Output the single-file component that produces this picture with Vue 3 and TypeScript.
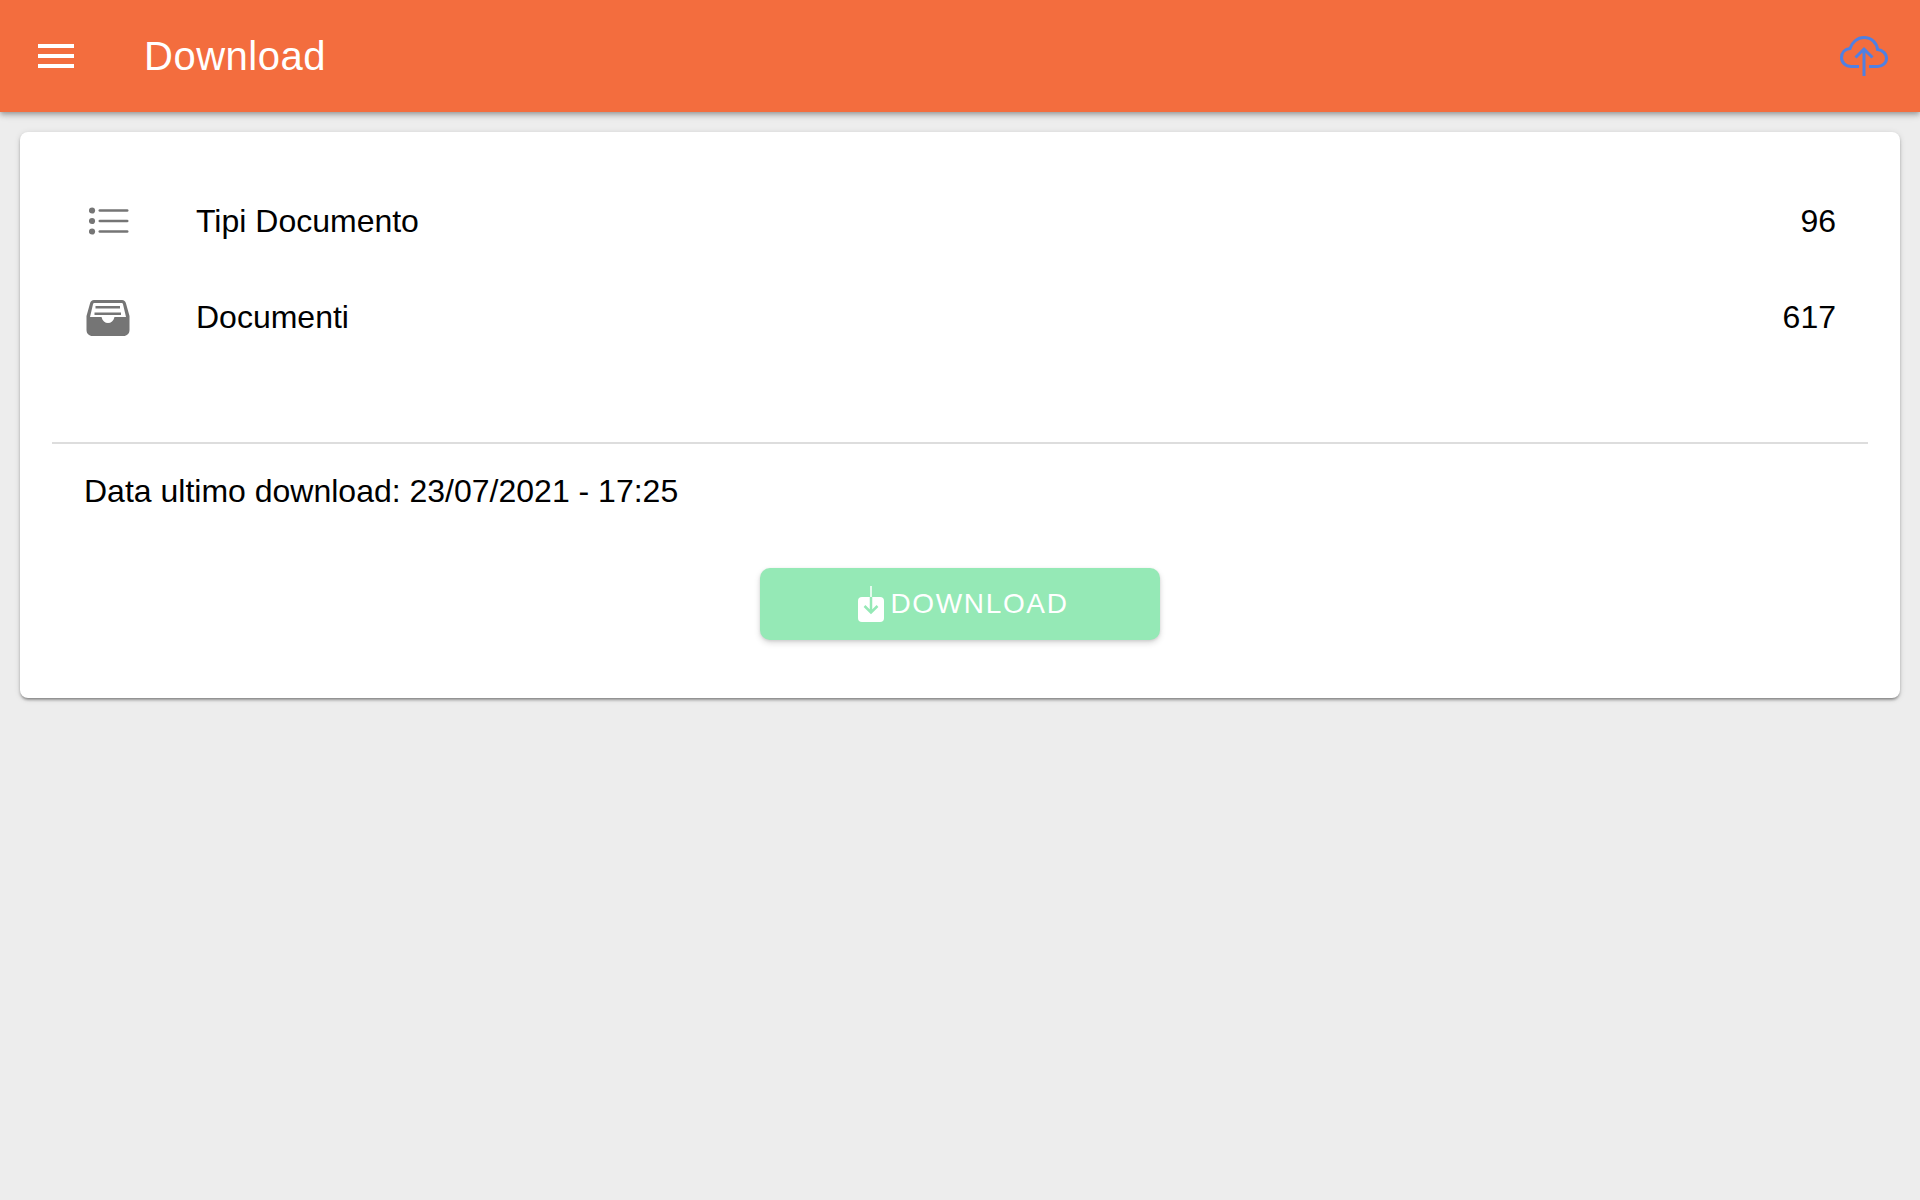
<script setup lang="ts">
interface Row { id: string; label: string; count: number }
const rows: Row[] = [
  { id: 'list', label: 'Tipi Documento', count: 96 },
  { id: 'inbox', label: 'Documenti', count: 617 },
]
</script>

<template>
  <div class="page">
    <header class="bar">
      <svg class="menu" viewBox="0 0 48 48" width="48" height="48">
        <path fill="#fff" d="M6 12h36v4H6zM6 22h36v4H6zM6 32h36v4H6z" />
      </svg>
      <h1 class="title">Download</h1>
      <svg class="cloud" viewBox="0 0 48 40" width="48" height="40" fill="none" stroke="#5080e2" stroke-width="3">
        <path d="M19 30.500H11.500C5.500 30.500 1.500 26.500 1.500 21.500C1.500 16.500 5 13 10 12.500C12 6 17.500 1.500 24 1.500C31.500 1.500 37 7 37.500 13.500C42.500 14 46.500 17.500 46.500 22.500C46.500 27 42.500 30.500 37.500 30.500H29" />
        <path d="M24 40V13M15.500 21.500L24 13L32.500 21.500" />
      </svg>
    </header>

    <main class="card">
      <ul class="list">
        <li v-for="row in rows" :key="row.id" class="row">
          <span class="row-icon">
            <svg v-if="row.id === 'list'" class="icon-list" viewBox="0 0 41 28" width="41" height="28">
              <g fill="#757575">
                <circle cx="3" cy="3.500" r="3.100" />
                <circle cx="3" cy="14" r="3.100" />
                <circle cx="3" cy="24.500" r="3.100" />
                <rect x="9.500" y="2.200" width="30" height="2.600" rx="1.300" />
                <rect x="9.500" y="12.700" width="30" height="2.600" rx="1.300" />
                <rect x="9.500" y="23.200" width="30" height="2.600" rx="1.300" />
              </g>
            </svg>
            <svg v-else class="icon-inbox" viewBox="0 0 44 36" width="44" height="36">
              <path fill="#757575" d="M8 0H36C38 0 39.500 1.500 40 3.500L43.500 16V30C43.500 33.500 41 36 37.500 36H6.500C3 36 0.500 33.500 0.500 30V16L4 3.500C4.500 1.500 6 0 8 0Z" />
              <path fill="#fff" d="M8.500 3H35.500C36.300 3 36.800 3.500 37 4.200L40 17H28.500C27.500 21 25 23 22 23C19 23 16.500 21 15.500 17H4L7 4.200C7.200 3.500 7.700 3 8.500 3Z" />
              <path fill="#757575" d="M9.500 6H34V8.500H9.500zM8.500 12.500H35V15H8.500z" />
            </svg>
          </span>
          <span class="row-label">{{ row.label }}</span>
          <span class="row-count">{{ row.count }}</span>
        </li>
      </ul>

      <hr class="divider" />

      <p class="last">Data ultimo download: 23/07/2021 - 17:25</p>

      <div class="actions">
        <button class="btn" type="button">
          <svg viewBox="0 0 26 36" width="26" height="36">
            <rect x="0" y="11" width="26" height="25" rx="4" fill="#fff" />
            <path d="M13 0V11" stroke="#fff" stroke-width="1.500" fill="none" />
            <path d="M13 11V26M6.500 20L13 26.500L19.500 20" stroke="#95e9b6" stroke-width="2.500" fill="none" />
          </svg>
          <span>DOWNLOAD</span>
        </button>
      </div>
    </main>
  </div>
</template>

<style>
html, body { margin: 0; background: #ededed; }
</style>

<style scoped>
.page {
  min-height: 1200px;
  background: #ededed;
  font-family: "Liberation Sans", Arial, sans-serif;
  color: #000;
}
.bar {
  height: 112px;
  box-sizing: border-box;
  display: flex;
  align-items: center;
  padding: 0 32px;
  background: #f36d3e;
  box-shadow: 0 2px 4px -1px rgba(0,0,0,.2), 0 4px 5px 0 rgba(0,0,0,.14), 0 1px 10px 0 rgba(0,0,0,.12);
}
.title {
  margin: 0 0 0 64px;
  flex: 1;
  font-size: 40px;
  font-weight: 400;
  letter-spacing: .5px;
  color: #fff;
}
.cloud { display: block; }
.card {
  margin: 20px 20px 0;
  height: 566px;
  box-sizing: border-box;
  padding: 41px 32px 0;
  background: #fff;
  border-radius: 8px;
  box-shadow: 0 3px 3px -2px rgba(0,0,0,.3), 0 2px 3px 0 rgba(0,0,0,.2), 0 1px 6px 0 rgba(0,0,0,.12);
}
.list { list-style: none; margin: 0; padding: 0; }
.row {
  height: 96px;
  display: flex;
  align-items: center;
  padding: 0 32px 0 34px;
  font-size: 32px;
}
.row-icon {
  width: 110px;
  flex: none;
  display: flex;
}
.row-icon svg { display: block; }
.icon-list { margin-left: 3px; }
.icon-inbox { margin-top: 2px; }
.row-label { flex: 1; }
.divider {
  margin: 77px 0 0;
  border: 0;
  border-top: 2px solid #ddd;
}
.last {
  margin: 29px 0 0 32px;
  font-size: 32px;
  line-height: 37px;
}
.actions {
  display: flex;
  justify-content: center;
  margin-top: 58px;
}
.btn {
  width: 400px;
  height: 72px;
  border: 0;
  border-radius: 10px;
  background: #95e9b6;
  color: #fff;
  font: inherit;
  font-size: 28px;
  letter-spacing: 1.650px;
  display: flex;
  align-items: center;
  justify-content: center;
  gap: 6px;
  padding: 0 0 0 7px;
  box-shadow: 0 3px 6px rgba(0,0,0,.14), 0 1px 3px rgba(0,0,0,.1);
}
.btn svg { display: block; }
</style>
